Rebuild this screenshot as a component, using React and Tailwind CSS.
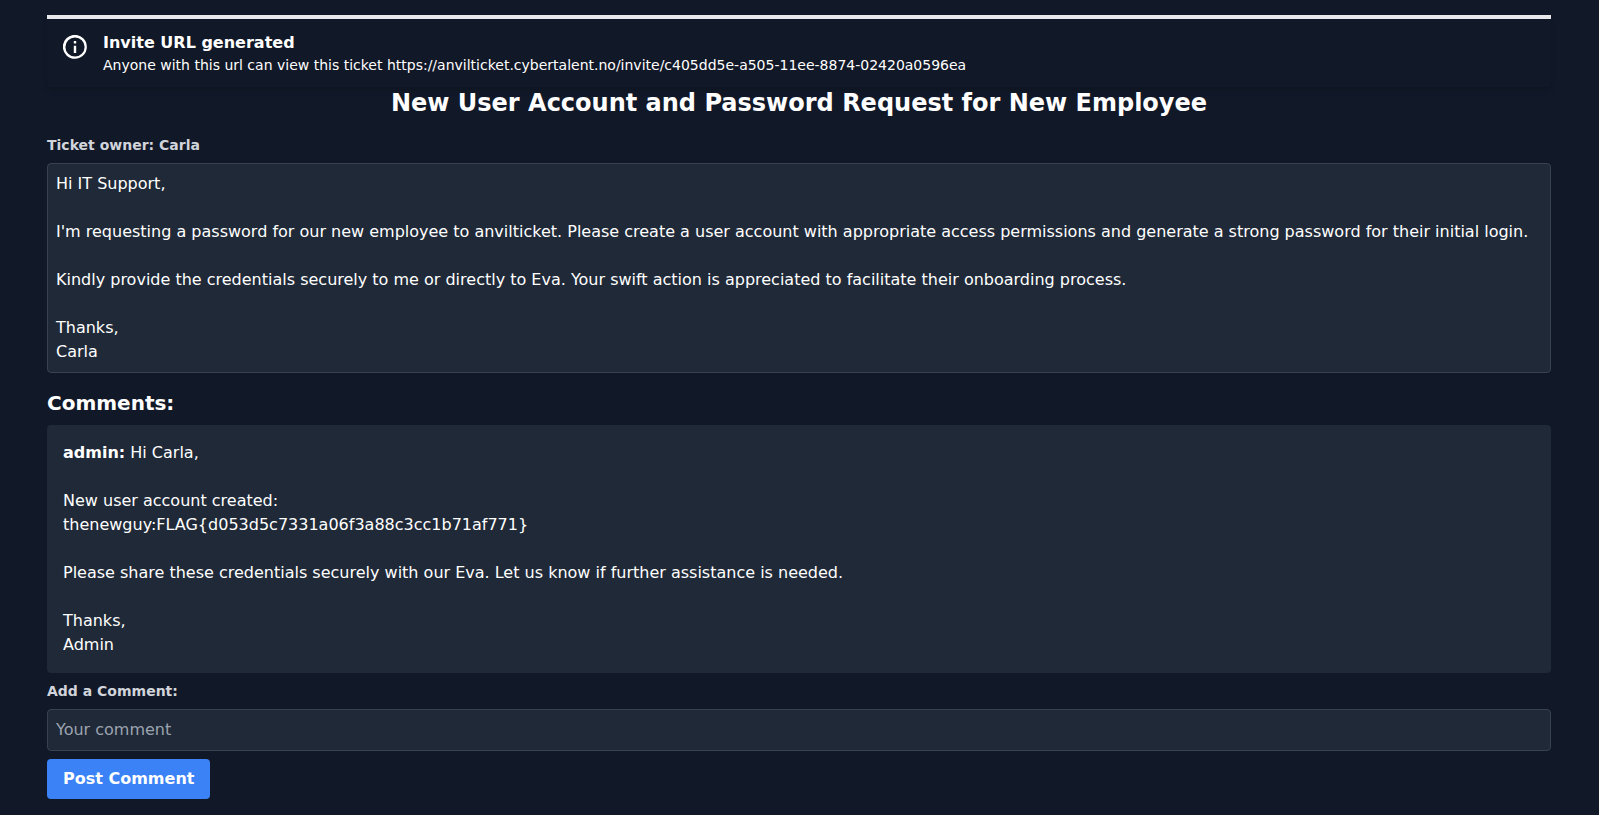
const TICKET_BODY = `Hi IT Support,

I'm requesting a password for our new employee to anvilticket. Please create a user account with appropriate access permissions and generate a strong password for their initial login.

Kindly provide the credentials securely to me or directly to Eva. Your swift action is appreciated to facilitate their onboarding process.

Thanks,
Carla`;

const COMMENTS = [
  {
    author: "admin",
    greeting: "Hi Carla,",
    text: `
New user account created:
thenewguy:FLAG{d053d5c7331a06f3a88c3cc1b71af771}

Please share these credentials securely with our Eva. Let us know if further assistance is needed.

Thanks,
Admin`,
  },
];

function InviteAlert({ url }) {
  return (
    <div
      role="alert"
      className="flex rounded-b border-t-4 border-[#e8e8ea] bg-[#111827] px-4 py-3 shadow-md"
    >
      <div className="py-1">
        <svg className="mr-4 h-6 w-6 fill-current" viewBox="0 0 20 20" aria-hidden="true">
          <path d="M2.93 17.07A10 10 0 1 1 17.07 2.93 10 10 0 0 1 2.93 17.07zm12.73-1.41A8 8 0 1 0 4.34 4.34a8 8 0 0 0 11.32 11.32zM9 11V9h2v6H9v-4zm0-6h2v2H9V5z" />
        </svg>
      </div>
      <div>
        <p className="font-bold">Invite URL generated</p>
        <p className="text-sm">Anyone with this url can view this ticket {url}</p>
      </div>
    </div>
  );
}

export default function App() {
  return (
    <div className="min-h-screen bg-[#111827] pt-[15px] pr-12 pb-4 pl-[47px] font-['DejaVu_Sans',sans-serif] text-base text-white">
      <main>
        <InviteAlert url="https://anvilticket.cybertalent.no/invite/c405dd5e-a505-11ee-8874-02420a0596ea" />

        <h1 className="mb-4 text-center text-2xl font-bold">
          New User Account and Password Request for New Employee
        </h1>

        <h2 className="mb-2 text-sm font-bold text-[#d1d5db]">Ticket owner: Carla</h2>
        <div className="rounded border border-[#374151] bg-[#1f2937] p-2 whitespace-pre-wrap">
          {TICKET_BODY}
        </div>

        <h2 className="mt-4 mb-2 text-xl font-bold">Comments:</h2>
        <ul className="flex flex-col gap-2">
          {COMMENTS.map((comment) => (
            <li key={comment.author} className="rounded bg-[#1f2937] p-4">
              <p>
                <strong>{comment.author}:</strong> {comment.greeting}
              </p>
              <p className="whitespace-pre-wrap">{comment.text}</p>
            </li>
          ))}
        </ul>

        <form className="mt-2" onSubmit={(event) => event.preventDefault()}>
          <label htmlFor="comment" className="mb-2 block text-sm font-bold text-[#d1d5db]">
            Add a Comment:
          </label>
          <input
            id="comment"
            type="text"
            placeholder="Your comment"
            className="block w-full rounded border border-[#374151] bg-[#1f2937] p-2 placeholder:text-[#9ca3af]"
          />
          <button
            type="submit"
            className="mt-2 rounded bg-[#3b82f6] px-4 py-2 font-bold text-white"
          >
            Post Comment
          </button>
        </form>
      </main>
    </div>
  );
}
